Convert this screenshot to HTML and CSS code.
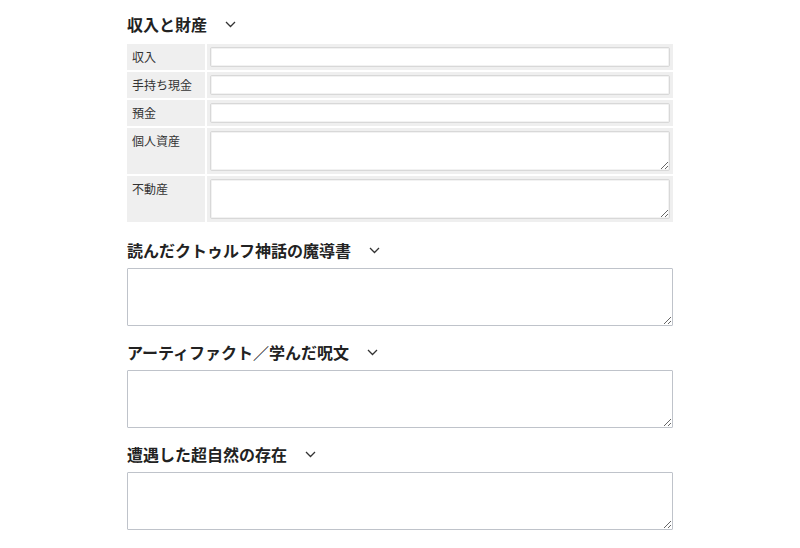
FILE: index.html
```html
<!DOCTYPE html>
<html lang="ja">
<head>
  <meta charset="UTF-8" />
  <meta name="viewport" content="width=device-width, initial-scale=1.0"/>
  <title>探索者シート</title>
  <link rel="stylesheet" href="styles.css">
</head>
<body>

  <div class="sheet">

    <section class="block">
      <h3 class="block-title">収入と財産 <span class="toggle"><svg width="11" height="7" viewBox="0 0 11 7"><polyline points="1,1 5.5,5.5 10,1" /></svg></span></h3>
      <table class="assets">
        <tr>
          <th>収入</th>
          <td><input type="text"></td>
        </tr>
        <tr>
          <th>手持ち現金</th>
          <td><input type="text"></td>
        </tr>
        <tr>
          <th>預金</th>
          <td><input type="text"></td>
        </tr>
        <tr>
          <th>個人資産</th>
          <td><textarea></textarea></td>
        </tr>
        <tr>
          <th>不動産</th>
          <td><textarea></textarea></td>
        </tr>
      </table>
    </section>

    <section class="block">
      <h3 class="block-title">読んだクトゥルフ神話の魔導書 <span class="toggle"><svg width="11" height="7" viewBox="0 0 11 7"><polyline points="1,1 5.5,5.5 10,1" /></svg></span></h3>
      <textarea class="memo"></textarea>
    </section>

    <section class="block">
      <h3 class="block-title">アーティファクト／学んだ呪文 <span class="toggle"><svg width="11" height="7" viewBox="0 0 11 7"><polyline points="1,1 5.5,5.5 10,1" /></svg></span></h3>
      <textarea class="memo"></textarea>
    </section>

    <section class="block">
      <h3 class="block-title">遭遇した超自然の存在 <span class="toggle"><svg width="11" height="7" viewBox="0 0 11 7"><polyline points="1,1 5.5,5.5 10,1" /></svg></span></h3>
      <textarea class="memo"></textarea>
    </section>

  </div>

</body>
</html>
```

FILE: styles.css
```css
body {
  font-family: "Noto Sans CJK JP", "Noto Sans", sans-serif;
  background-color: #ffffff;
  color: #222;
  margin: 0;
  padding: 12px 0 0;
}

.sheet {
  width: 546px;
  margin: 0 auto;
}

.block {
  margin-bottom: 14px;
}

.block-title {
  font-size: 16px;
  font-weight: bold;
  line-height: 24px;
  margin: 0 0 6px 0;
  display: flex;
  align-items: center;
  gap: 18px;
}

.toggle {
  display: flex;
  align-items: center;
}

.toggle polyline {
  fill: none;
  stroke: #333;
  stroke-width: 1.3;
}

/* 収入と財産の表 */
.assets {
  width: calc(100% + 4px);
  margin: 0 -2px;
  border-collapse: separate;
  border-spacing: 2px;
}

.assets th,
.assets td {
  background-color: #efefef;
  vertical-align: top;
}

.assets th {
  width: 68px;
  padding: 5px 5px;
  font-size: 12px;
  font-weight: normal;
  line-height: 16px;
  color: #333;
  text-align: left;
  white-space: nowrap;
}

.assets td {
  padding: 3px 3px;
}

.assets input,
.assets textarea {
  display: block;
  box-sizing: border-box;
  width: 100%;
  margin: 0;
  border: 1px solid #d8d8d8;
  border-radius: 2px;
  box-shadow: inset 0 0 0 1px #f2f2f2;
  background-color: #fff;
  font-family: inherit;
  font-size: 12px;
}

.assets input {
  height: 20px;
  padding: 0 4px;
}

.assets textarea {
  height: 40px;
  padding: 2px 4px;
}

.memo {
  display: block;
  box-sizing: border-box;
  width: 100%;
  height: 58px;
  margin: 0;
  padding: 4px;
  border: 1px solid #bfc3ca;
  border-radius: 1px;
  font-family: inherit;
  font-size: 13px;
}
```
